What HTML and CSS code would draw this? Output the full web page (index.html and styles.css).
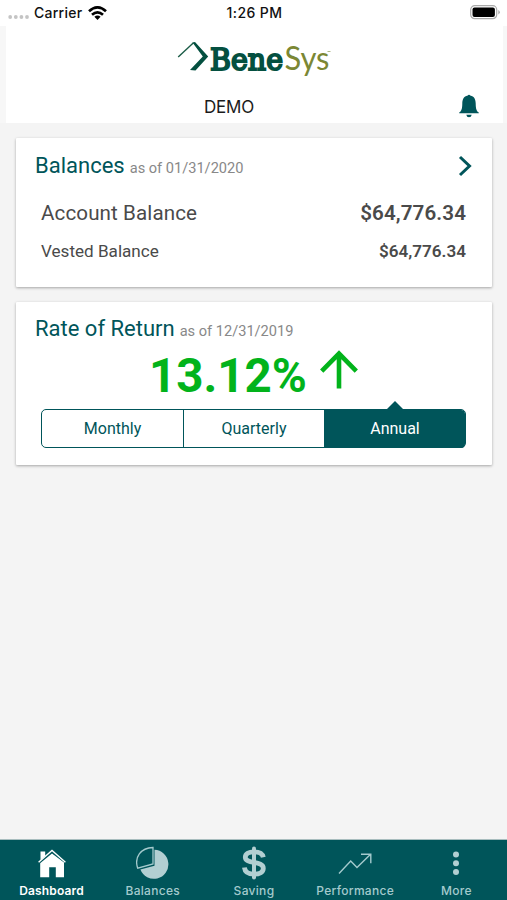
FILE: index.html
```html
<!DOCTYPE html>
<html lang="en">
	<head>
		<meta charset="utf-8" />
		<title>BeneSys</title>
		<link rel="stylesheet" href="styles.css">
	</head>
	<body>
		<div class="status">
			<div class="carrier">
				<svg class="signal" width="22" height="6" viewBox="0 0 22 6"><g fill="#c4c4c4"><circle cx="2.2" cy="3" r="1.9"/><circle cx="7.8" cy="3" r="1.9"/><circle cx="13.4" cy="3" r="1.9"/><circle cx="19" cy="3" r="1.9"/></g></svg>
				<span class="carrier-name">Carrier</span>
				<svg class="wifi" width="19" height="14" viewBox="0 0 19 14"><g fill="none" stroke="#000" stroke-width="2.7"><path d="M1 5.2Q9.500 -2.400 18 5.200"/><path d="M4 8.700Q9.500 3.900 15 8.700"/></g><path d="M9.500 14L6.400 10.800Q9.500 8.300 12.600 10.800Z"/></svg>
			</div>
			<div class="time">1:26 PM</div>
			<svg class="battery" width="31" height="15" viewBox="0 0 31 15"><rect x=".7" y=".7" width="26" height="13" rx="4" fill="none" stroke="#aaa" stroke-width="1.2"/><rect x="2.500" y="2.500" width="22.400" height="9.400" rx="2"/><path d="M28.300 5v4.500q1.500-.7 1.500-2.200T28.300 5z" fill="#aaa"/></svg>
		</div>

		<header class="header">
			<svg class="logo" width="156" height="42" viewBox="0 0 156 42">
				<path d="M1.200 18L16.500 3.800" fill="none" stroke="#1b5c47" stroke-width="1.400"/>
				<path d="M15.500 3.600L18 3L31.200 17.500L18.500 31.400L13 31L25.800 17.600Z" fill="#045040"/>
				<text class="logo-bene" x="33" y="30.500" textLength="73" lengthAdjust="spacingAndGlyphs">Bene</text>
				<text class="logo-sys" x="107.500" y="31" textLength="45" lengthAdjust="spacingAndGlyphs">Sys</text>
				<path d="M150.500 12.500h3" stroke="#9aa66a" stroke-width=".8"/>
			</svg>
			<div class="account">
				<span class="account-name">DEMO</span>
				<svg class="bell" width="20" height="24" viewBox="0 0 20 24"><path d="M8.800 1.500a1.300 1.300 0 0 1 2.400 0C15.400 2.300 16.600 5.500 16.700 9.500C16.800 14.500 17.300 17 19.800 18.500V19.300H.2V18.500C2.700 17 3.200 14.500 3.300 9.500C3.400 5.500 4.600 2.300 8.800 1.500zM7.300 20.700h5.400q-.4 2.500-2.700 2.500t-2.700-2.500z"/></svg>
			</div>
		</header>

		<main class="cards">
			<section class="card balances">
				<div class="card-head">
					<h2>Balances</h2>
					<small>as of 01/31/2020</small>
					<svg class="chevron" width="14" height="22" viewBox="0 0 14 22"><path d="M2 2l9.500 9L2 20" fill="none" stroke="#00555a" stroke-width="3"/></svg>
				</div>
				<div class="row row-account"><span>Account Balance</span><b>$64,776.34</b></div>
				<div class="row row-vested"><span>Vested Balance</span><b>$64,776.34</b></div>
			</section>

			<section class="card return">
				<div class="card-head">
					<h2>Rate of Return</h2>
					<small>as of 12/31/2019</small>
				</div>
				<div class="rate">
					<span>13.12%</span>
					<svg width="38" height="40" viewBox="0 0 38 40"><path d="M19 39.500V5M1.700 22.200L19 4.600l17.300 17.600" fill="none" stroke="#02b31b" stroke-width="4.600"/></svg>
				</div>
				<div class="periods">
					<a>Monthly</a>
					<a>Quarterly</a>
					<a class="active">Annual</a>
				</div>
			</section>
		</main>

		<nav class="tabs">
			<a class="tab active">
				<svg width="34" height="34" viewBox="0 0 34 34"><path d="M6 16.500L17 7.600l12 8.900V31.200h-8.200v-10h-6.600v10H5.200V17.200z" fill="#fff"/><path d="M5.500 14V5.500h4.700v4.600z" fill="#fff"/><path d="M3.600 16.200L17 4.400l13.400 11.800" fill="none" stroke="#fff" stroke-width="1.400"/></svg>
				<span>Dashboard</span>
			</a>
			<a class="tab">
				<svg width="34" height="34" viewBox="0 0 34 34"><path d="M18.500 3.800A14.500 14.500 0 1 1 4.400 23.600L18.500 19.700Z" fill="#b2cfd2"/><path d="M17 1.500V18L1.700 22.200C-2 11.500 4.600 1.800 17 1.500z" fill="#00555a" stroke="#a4cacd" stroke-width="1.300"/></svg>
				<span>Balances</span>
			</a>
			<a class="tab">
				<svg width="34" height="34" viewBox="0 0 34 34"><path d="M26.300 11.200C25.500 7.200 21.800 5.800 17 5.800C11.500 5.800 8.300 7.900 8.300 11.200C8.300 18.600 26.300 14.200 26.300 22.300C26.300 26.200 22.700 28.200 17.200 28.200C11.500 28.200 7.900 26 7.400 21.500" fill="none" stroke="#b2cfd2" stroke-width="4.800"/><path d="M17 2.500v29" stroke="#b2cfd2" stroke-width="4" stroke-linecap="round"/></svg>
				<span>Saving</span>
			</a>
			<a class="tab">
				<svg width="34" height="34" viewBox="0 0 34 34"><path d="M1 27.500L12.700 15l6.300 6.600L32.300 8.500M23 8.300h9.800v8.900" fill="none" stroke="#a4cacd" stroke-width="1.400"/></svg>
				<span>Performance</span>
			</a>
			<a class="tab">
				<svg width="34" height="34" viewBox="0 0 34 34"><g fill="#b2cfd2"><circle cx="17" cy="8.500" r="3"/><circle cx="17" cy="17.300" r="3"/><circle cx="17" cy="26" r="3"/></g></svg>
				<span>More</span>
			</a>
		</nav>
	</body>
</html>
```
FILE: styles.css
```css
* { box-sizing: border-box; }
html { height: 100%; }
body {
	margin: 0;
	height: 100%;
	display: flex;
	flex-direction: column;
	background: #f4f4f4;
	font-family: Roboto, sans-serif;
	color: #4a4a4a;
	overflow: hidden;
}
svg { display: block; flex: none; }

.status {
	height: 26px;
	padding: 0 6px 1px 8px;
	display: grid;
	grid-template-columns: 1fr auto 1fr;
	align-items: center;
	background: #fff;
	font-family: Inter, sans-serif;
	font-size: 14px;
	font-weight: 500;
	color: #111;
}
.carrier { display: flex; align-items: center; }
.carrier-name { margin: 0 6px 0 4px; letter-spacing: 0.25px; }
.time { letter-spacing: 0.4px; }
.signal { margin-top: 9px; }
.battery { justify-self: end; }

.header {
	height: 97px;
	padding-top: 13px;
	background: #fff;
	border: solid #f7f7f7;
	border-width: 0 4px 0 6px;
}
.logo { margin: 0 auto; }
.logo-bene {
	font: 30px "DejaVu Serif", serif;
	fill: #045040;
	stroke: #045040;
	stroke-width: 2px;
}
.logo-sys {
	font: 32px Lato, sans-serif;
	fill: #7b8734;
}
.account {
	display: flex;
	align-items: center;
	justify-content: space-between;
	height: 24px;
	margin-top: 13px;
	padding: 0 24px 0 198px;
	color: #1b1b1b;
}
.account-name {
	padding-top: 2px;
	font: 17px/24px Inter, sans-serif;
	letter-spacing: -0.2px;
}
.bell { fill: #00555a; }

.cards { flex: 1; padding: 15px 15px 0 16px; }
.card {
	background: #fff;
	margin-bottom: 15px;
	padding: 0 26px 0 25px;
	border-radius: 1px;
	box-shadow: 0 1px 3px rgba(0,0,0,0.33);
}
.balances { height: 149px; padding-top: 12px; }
.return { height: 163px; padding-top: 11px; }
.card-head {
	display: flex;
	align-items: baseline;
	height: 32px;
	margin: 0 -6px;
}
h2 {
	margin: 0 5px 0 0;
	font-size: 22px;
	font-weight: normal;
	line-height: 32px;
	color: #00555a;
}
small { font-size: 14.6px; color: #888; }
.chevron { align-self: center; margin-left: auto; }

.row {
	display: flex;
	justify-content: space-between;
}
.row b { font-weight: 600; }
.row-account { margin-top: 17px; font-size: 20.6px; line-height: 28px; letter-spacing: 0.1px; }
.row-vested { margin-top: 12px; font-size: 17.1px; line-height: 24px; }

.rate {
	display: flex;
	justify-content: center;
	height: 54px;
	margin-top: 4px;
	font-size: 47.5px;
	font-weight: bold;
	line-height: 54px;
	color: #02b31b;
}
.rate svg { margin: 0 0 0 13px; }
.periods {
	display: grid;
	grid-template-columns: repeat(3, 1fr);
	height: 39px;
	margin-top: 6px;
	border: 1px solid #00555a;
	border-radius: 5px;
}
.periods a {
	position: relative;
	font-size: 16px;
	line-height: 38px;
	text-align: center;
	color: #00555a;
}
.periods a + a { border-left: 1px solid #00555a; }
.periods .active {
	background: #00555a;
	color: #fff;
	border-radius: 0 4px 4px 0;
}
/* pointer on top of the selected period */
.periods .active::before {
	content: '';
	position: absolute;
	top: -9px;
	left: calc(50% - 9px);
	border: solid transparent;
	border-width: 0 9px 9px;
	border-bottom-color: #00555a;
}

.tabs {
	display: grid;
	grid-template-columns: repeat(5, 1fr);
	height: 61px;
	padding-left: 1px;
	border-top: 1px solid #a8bdbe;
	background: #00555a;
}
.tab {
	display: flex;
	flex-direction: column;
	align-items: center;
	padding-top: 6px;
	font: 500 12px/14px Inter, sans-serif;
	letter-spacing: 0.3px;
	color: #a4cacd;
}
.tab span { margin-top: 4px; }
.tab.active { color: #fff; font-weight: 600; letter-spacing: 0.15px; }
```
